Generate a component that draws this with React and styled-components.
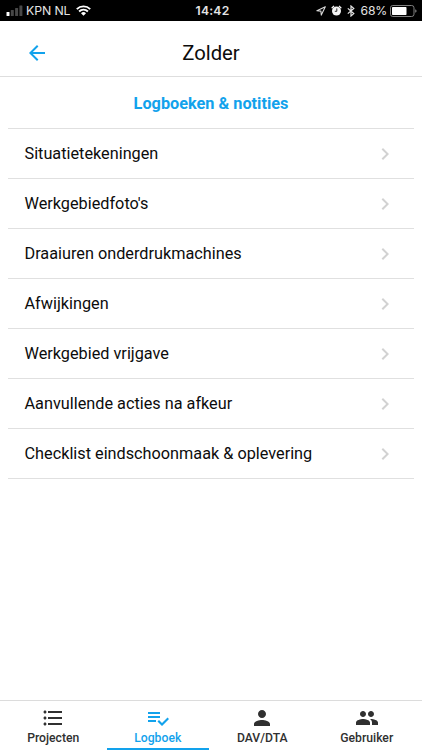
import React, { useState } from 'react';
import styled, { createGlobalStyle } from 'styled-components';
import {
  MdArrowBack,
  MdChevronRight,
  MdFormatListBulleted,
  MdPerson,
  MdPeople,
} from 'react-icons/md';

const GlobalStyle = createGlobalStyle`
  * {
    box-sizing: border-box;
  }

  body {
    margin: 0;
    background: #fff;
    font-family: Roboto, sans-serif;
    color: #0c0c0c;
  }
`;

const Screen = styled.div`
  display: flex;
  flex-direction: column;
  height: 750px;
  background: #fff;
`;

const StatusBar = styled.div`
  display: grid;
  grid-template-columns: 1fr auto 1fr;
  align-items: center;
  flex: none;
  height: 21px;
  padding: 0 5px 0 6px;
  background: #000;
  color: #e4e4e4;
  font-family: Inter, sans-serif;
  font-size: 12.3px;
  line-height: 21px;
`;

const StatusSide = styled.div`
  display: flex;
  align-items: center;
  justify-content: ${({ $end }) => ($end ? 'flex-end' : 'flex-start')};

  svg {
    flex: none;
  }
`;

const StatusIcons = styled.div`
  display: flex;
  align-items: center;
  gap: 5px;
`;

const Carrier = styled.span`
  margin: 0 6px 0 3px;
  letter-spacing: -0.1px;
`;

const Clock = styled.span`
  padding-left: 2px;
  font-weight: 600;
  font-size: 12.2px;
  letter-spacing: 0.2px;
`;

const Percentage = styled.span`
  margin: 0 3px 0 6px;
  font-size: 12.2px;
  letter-spacing: -0.2px;
`;

const Header = styled.header`
  display: grid;
  grid-template-columns: 74px 1fr 74px;
  align-items: center;
  flex: none;
  height: 56px;
  padding-top: 8px;
  border-bottom: 1px solid #dedede;
`;

const BackButton = styled.button`
  display: flex;
  justify-content: center;
  padding: 0;
  border: none;
  background: none;
  color: #12a2ec;
  cursor: pointer;
`;

const Title = styled.h1`
  margin: 0;
  font-size: 20.3px;
  font-weight: 400;
  line-height: 24px;
  text-align: center;
`;

const Content = styled.main`
  flex: 1;
  padding: 0 8px;
`;

const SectionTitle = styled.h2`
  margin: 0;
  height: 52px;
  border-bottom: 1px solid #e0e0e0;
  color: #12a2ec;
  font-size: 16.3px;
  font-weight: 700;
  line-height: 53px;
  text-align: center;
`;

const Row = styled.div`
  display: flex;
  align-items: center;
  justify-content: space-between;
  height: 50px;
  padding: 0 17px 0 16.5px;
  border-bottom: 1px solid #e0e0e0;
  font-size: 16.25px;
  cursor: pointer;

  svg {
    color: #d2d2d2;
  }
`;

const TabBar = styled.nav`
  display: flex;
  flex: none;
  height: 50px;
  padding: 0 2px 0 1px;
  border-top: 1px solid #dcdcdc;
`;

const Tab = styled.button`
  display: flex;
  flex-direction: column;
  align-items: center;
  width: 104.5px;
  padding: 5px 0 0;
  border: none;
  background: linear-gradient(#12a2ec, #12a2ec) bottom center / ${({ $active }) => ($active ? '102px 2px' : '0 0')} no-repeat;
  color: ${({ $active }) => ($active ? '#12a2ec' : '#303030')};
  font-family: inherit;
  font-size: 12.2px;
  font-weight: 500;
  line-height: 16px;
  cursor: pointer;
`;

function SignalIcon() {
  return (
    <svg width="17" height="11" viewBox="0 0 17 11">
      <rect x="0.5" y="7" width="3" height="4" rx="0.5" fill="#fff" />
      <rect x="4.8" y="5" width="3" height="6" rx="0.5" fill="#484848" />
      <rect x="9.1" y="3" width="3" height="8" rx="0.5" fill="#484848" />
      <rect x="13.4" y="0.5" width="3" height="10.5" rx="0.5" fill="#484848" />
    </svg>
  );
}

function WifiIcon() {
  return (
    <svg width="15" height="11" viewBox="0 0 15 11" fill="none" stroke="#fff" strokeWidth="1.9">
      <path d="M0.8 4.1a9.5 9.5 0 0 1 13.4 0" />
      <path d="M3.1 6.5a6.2 6.2 0 0 1 8.8 0" />
      <path d="M7.5 10.8L5 8.3a3.6 3.6 0 0 1 5 0z" fill="#fff" stroke="none" />
    </svg>
  );
}

function LocationIcon() {
  return (
    <svg width="10" height="10" viewBox="0 0 10 10" fill="none" stroke="#d8d8d8" strokeWidth="1.1" strokeLinejoin="round">
      <path d="M9.3 0.7L0.9 4.8l4 0.3 0.4 4z" />
    </svg>
  );
}

function AlarmIcon() {
  return (
    <svg width="11" height="11" viewBox="0 0 11 11">
      <circle cx="5.5" cy="6" r="4.5" fill="#f4f4f4" />
      <path d="M0.7 3.2L3 0.9M10.3 3.2L8 0.9" stroke="#f4f4f4" strokeWidth="1.3" />
      <path d="M5.8 3.4v2.9H3.8" fill="none" stroke="#000" strokeWidth="0.8" />
    </svg>
  );
}

function BluetoothIcon() {
  return (
    <svg width="8" height="12" viewBox="0 0 8 12" fill="none" stroke="#e8e8e8" strokeWidth="1.2">
      <path d="M0.8 3.4l6 5.2L4 11V1l2.8 2.4-6 5.2" />
    </svg>
  );
}

function BatteryIcon() {
  return (
    <svg width="27" height="12" viewBox="0 0 27 12">
      <rect x="0.5" y="0.5" width="23.5" height="11" rx="2.3" fill="none" stroke="#808080" />
      <rect x="2" y="2" width="14.5" height="8" rx="0.7" fill="#fff" />
      <path d="M25.2 4.2q1.4 0.6 1.4 1.8t-1.4 1.8z" fill="#808080" />
    </svg>
  );
}

function ChecklistIcon({ size }) {
  return (
    <svg width={size} height={size} viewBox="0 0 24 24" fill="currentColor">
      <path d="M14 10H2v2h12v-2zm0-4H2v2h12V6zM2 16h8v-2H2v2zm19.5-4.5L23 13l-6.99 7-4.51-4.5L13 14l3.01 3 5.49-5.5z" />
    </svg>
  );
}

const items = [
  'Situatietekeningen',
  "Werkgebiedfoto's",
  'Draaiuren onderdrukmachines',
  'Afwijkingen',
  'Werkgebied vrijgave',
  'Aanvullende acties na afkeur',
  'Checklist eindschoonmaak & oplevering',
];

const tabs = [
  { label: 'Projecten', icon: MdFormatListBulleted },
  { label: 'Logboek', icon: ChecklistIcon },
  { label: 'DAV/DTA', icon: MdPerson },
  { label: 'Gebruiker', icon: MdPeople },
];

export default function App() {
  const [activeTab, setActiveTab] = useState('Logboek');

  return (
    <>
      <GlobalStyle />
      <Screen>
        <StatusBar>
          <StatusSide>
            <SignalIcon />
            <Carrier>KPN NL</Carrier>
            <WifiIcon />
          </StatusSide>
          <Clock>14:42</Clock>
          <StatusSide $end>
            <StatusIcons>
              <LocationIcon />
              <AlarmIcon />
              <BluetoothIcon />
            </StatusIcons>
            <Percentage>68%</Percentage>
            <BatteryIcon />
          </StatusSide>
        </StatusBar>
        <Header>
          <BackButton aria-label="Terug">
            <MdArrowBack size={24} />
          </BackButton>
          <Title>Zolder</Title>
        </Header>
        <Content>
          <SectionTitle>Logboeken &amp; notities</SectionTitle>
          {items.map((item) => (
            <Row key={item}>
              {item}
              <MdChevronRight size={24} />
            </Row>
          ))}
        </Content>
        <TabBar>
          {tabs.map(({ label, icon: Icon }) => (
            <Tab key={label} $active={label === activeTab} onClick={() => setActiveTab(label)}>
              <Icon size={24} />
              {label}
            </Tab>
          ))}
        </TabBar>
      </Screen>
    </>
  );
}
